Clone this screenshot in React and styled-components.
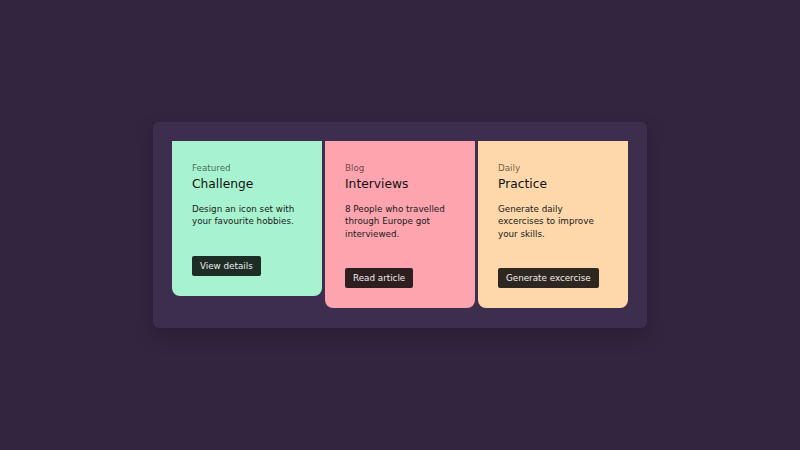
import React from "react";
import styled, { createGlobalStyle } from "styled-components";

const Global = createGlobalStyle`
  html, body { margin: 0; padding: 0; }
  body {
    background: #33243f;
    font-family: "DejaVu Sans", sans-serif;
  }
`;

const cards = [
  { label: "Featured", title: "Challenge", text: "Design an icon set with your favourite hobbies.", action: "View details", color: "#a7f3d0" },
  { label: "Blog", title: "Interviews", text: "8 People who travelled through Europe got interviewed.", action: "Read article", color: "#fda4af" },
  { label: "Daily", title: "Practice", text: "Generate daily excercises to improve your skills.", action: "Generate excercise", color: "#fed7aa" },
];

const Page = () => {
  return (
    <Screen>
      <Global />
      <Panel>
        {cards.map((c) => (
          <Card key={c.title} $bg={c.color}>
            <Label>{c.label}</Label>
            <Title>{c.title}</Title>
            <Text>{c.text}</Text>
            <Button>{c.action}</Button>
          </Card>
        ))}
      </Panel>
    </Screen>
  );
};

const Screen = styled.div`
  width: 800px;
  height: 450px;
  display: flex;
  align-items: center;
  justify-content: center;
`;

const Panel = styled.div`
  display: flex;
  align-items: flex-start;
  gap: 3px;
  padding: 19px 19px 20px 19px;
  background: #3e2e4d;
  border-radius: 6px;
  box-shadow: 0 8px 20px rgba(0, 0, 0, 0.18);
`;

const Card = styled.div`
  width: 150px;
  box-sizing: border-box;
  padding: 22px 20px 20px 20px;
  background: ${({ $bg }) => $bg};
  border-radius: 0 0 8px 8px;
  display: flex;
  flex-direction: column;
  align-items: flex-start;
`;

const Label = styled.div`
  font-size: 8.75px;
  line-height: 11px;
  color: rgba(0, 0, 0, 0.6);
`;

const Title = styled.h2`
  margin: 3.5px 0 0 0;
  font-size: 12.25px;
  line-height: 15px;
  font-weight: 400;
  color: #111;
`;

const Text = styled.p`
  margin: 10.5px 0 0 0;
  font-size: 8.75px;
  line-height: 12.5px;
  color: #1a1a1a;
`;

const Button = styled.button`
  margin-top: 28px;
  height: 20px;
  padding: 0 8px;
  border: none;
  border-radius: 2px;
  background: rgba(0, 0, 0, 0.82);
  color: #eee;
  font-family: "DejaVu Sans", sans-serif;
  font-size: 8.75px;
  white-space: nowrap;
  cursor: pointer;
`;

export default Page;
